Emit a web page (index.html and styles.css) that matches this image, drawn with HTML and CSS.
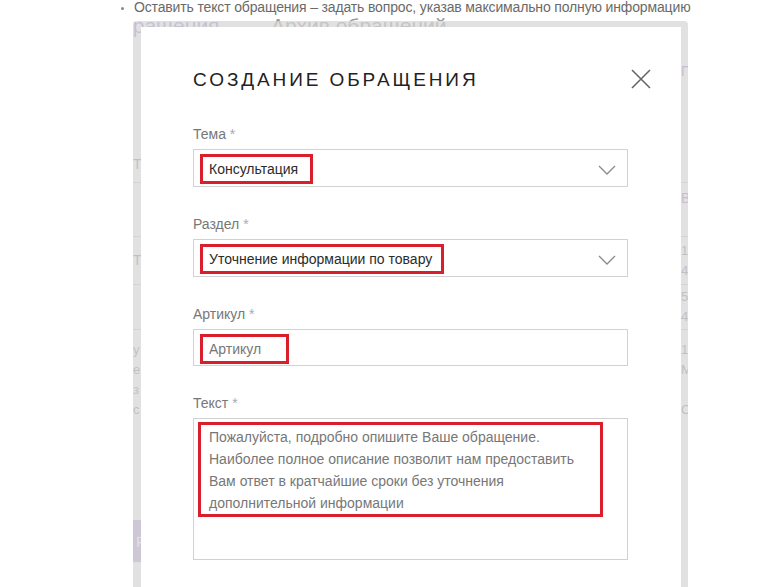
FILE: index.html
```
<!DOCTYPE html>
<html lang="ru">
<head>
  <meta charset="UTF-8" />
  <meta name="viewport" content="width=device-width, initial-scale=1" />
  <title>Создание обращения</title>
  <link rel="stylesheet" href="styles.css">
</head>
<body>
  <ul class="note">
    <li>Оставить текст обращения – задать вопрос, указав максимально полную информацию</li>
  </ul>

  <div class="frame">
    <!-- страница под модальным окном -->
    <div class="tabs">
      <span class="tab active">обращения</span>
      <span class="tab-dot">•</span>
      <span class="tab">Архив обращений</span>
    </div>
    <div class="rows">
      <div class="row r1"><span></span><span class="peek purple top">Пр</span></div>
      <div class="row r2"><span class="peek">Тема</span><span></span></div>
      <div class="row r3"><span></span><span class="peek purple top">В</span></div>
      <div class="row r4"><span class="peek">Тема</span><span class="peek small">13<br>4</span></div>
      <div class="row r5"><span></span><span class="peek small">5<br>4</span></div>
      <div class="row r6"><span class="peek small">у<br>е<br>з<br>с</span><span class="peek small">15<br>М<br><br>С</span></div>
      <div class="row r7"><span class="ghost-btn">Р</span><span></span></div>
    </div>

    <div class="overlay">
      <div class="modal">
        <h2 class="modal-title">Создание обращения</h2>
        <button class="close" aria-label="Закрыть">
          <svg width="20" height="20" viewBox="0 0 20 20">
            <path d="M1 1 L19 19 M19 1 L1 19" stroke="#666" stroke-width="1.6" fill="none"/>
          </svg>
        </button>

        <div class="field">
          <label>Тема <i>*</i></label>
          <div class="control select">
            <span class="mark w-theme">Консультация</span>
            <svg class="chev" width="18" height="10" viewBox="0 0 18 10">
              <polyline points="1,1 9,9 17,1" stroke="#8a8a8a" stroke-width="1.3" fill="none"/>
            </svg>
          </div>
        </div>

        <div class="field">
          <label>Раздел <i>*</i></label>
          <div class="control select">
            <span class="mark w-section">Уточнение информации по товару</span>
            <svg class="chev" width="18" height="10" viewBox="0 0 18 10">
              <polyline points="1,1 9,9 17,1" stroke="#8a8a8a" stroke-width="1.3" fill="none"/>
            </svg>
          </div>
        </div>

        <div class="field">
          <label>Артикул <i>*</i></label>
          <div class="control input">
            <span class="mark placeholder w-art">Артикул</span>
          </div>
        </div>

        <div class="field">
          <label>Текст <i>*</i></label>
          <div class="control area">
            <div class="mark placeholder w-text">Пожалуйста, подробно опишите Ваше обращение.<br>Наиболее полное описание позволит нам предоставить<br>Вам ответ в кратчайшие сроки без уточнения<br>дополнительной информации</div>
          </div>
        </div>
      </div>
    </div>
  </div>
</body>
</html>
```

FILE: styles.css
```
* { margin:0; padding:0; box-sizing:border-box }
html, body { width:100%; height:100%; background:#fff }
body {
  font-family:"Liberation Sans", Arial, sans-serif;
  overflow:hidden;
}

/* строка над окном */
.note {
  height:14px; padding-left:134px;
  font-size:14px; line-height:14px; color:#6a6a6a;
  letter-spacing:-0.15px;
  white-space:nowrap;
}
.note li::marker { color:#888; font-size:10px }

/* страница под окном */
.frame {
  position:relative;
  margin-left:133px; width:555px; height:573px;
  overflow:hidden;
}
.tabs {
  display:flex; align-items:baseline; gap:18px;
  height:16px; margin-left:-24px;
  font-size:21px; line-height:24px; color:#9a9a9a;
}
.tab.active { color:#a58cc8 }
.tab-dot { font-size:10px; color:#a58cc8 }
.tabs .tab:last-child { margin-left:12px }

.row {
  display:grid; grid-template-columns:548px 1fr;
  border-bottom:1px solid #cfcfcf;
  font-size:14px; color:#8a8a8a;
}
.row .peek { display:flex; align-items:center; line-height:15px }
.row .peek.top { align-items:flex-start; padding-top:8px }
.r1 .peek.top { padding-top:34px }
.row .peek.small { flex-direction:column; align-items:flex-start; justify-content:center; font-size:13px; line-height:20px }
.peek.purple { color:#9b80c4 }
.r1 { height:117px; border-bottom-color:transparent }
.r2 { height:36px }
.r3 { height:54px }
.r4 { height:48px }
.r5 { height:45px }
.r6 { height:100px; border-bottom:none }
.r7 { height:132px; border:none; align-items:end }
.ghost-btn {
  display:flex; align-items:center; padding-left:3px;
  width:120px; height:42px;
  background:#b6a2d6; color:#fff; font-size:15px;
}

/* модальное окно */
.overlay {
  position:absolute; top:7px; left:0; right:0; bottom:0;
  background:rgba(214,214,214,0.72);
  border-radius:4px 4px 0 0;
  padding:6px 7px 0 8px;
}
.modal {
  position:relative;
  height:100%;
  background:#fff;
  padding:41px 53px 0 52px;
}
.modal-title {
  font-size:19px; line-height:24px; font-weight:400;
  text-transform:uppercase; letter-spacing:2.9px;
  color:#222; margin-bottom:33px;
}
.close {
  position:absolute; top:42px; right:30px;
  width:20px; height:20px;
  border:none; background:none; cursor:pointer;
}
.close svg { display:block }

.field { margin-bottom:28px }
.field label {
  display:block; margin-bottom:6px;
  font-size:14px; line-height:18px; color:#777;
}
.field label i { font-style:normal; color:#aaa }

.control {
  display:flex; align-items:flex-start;
  border:1px solid #d2d2d2; background:#fff;
  padding:4px 6px;
}
.select, .input { height:38px }
.input { height:37px }
.area { height:142px; padding:3px 4px }
.chev { margin-left:auto; margin-top:11px; margin-right:5px }

.mark {
  display:inline-block;
  border:3px solid #d91f2c;
  padding:0 6px;
  font-size:14px; line-height:24px; color:#2b2b2b;
}
.mark.placeholder { color:#777 }
.w-theme { width:113px }
.w-section { width:244px; padding-right:0; white-space:nowrap }
.w-art { width:89px }
.w-text { width:405px; padding:1px 8px 0; line-height:22px }
```
